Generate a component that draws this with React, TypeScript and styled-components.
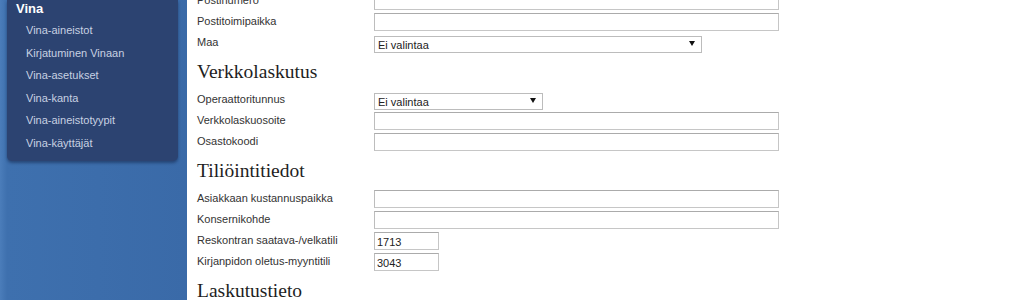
import styled, { createGlobalStyle } from "styled-components";

const GlobalStyle = createGlobalStyle`
  html, body {
    margin: 0;
    padding: 0;
    background: #fff;
  }
  body {
    font-family: "Liberation Sans", Arial, sans-serif;
    overflow: hidden;
  }
`;

type Field = {
    label: string
    kind?: 'input' | 'select'
    width: number
    value?: string
}

type Section = {
    title?: string
    fields: Field[]
}

const menu = [
    'Vina-aineistot',
    'Kirjatuminen Vinaan',
    'Vina-asetukset',
    'Vina-kanta',
    'Vina-aineistotyypit',
    'Vina-käyttäjät',
]

const sections: Section[] = [
    {
        fields: [
            { label: 'Postinumero', width: 405 },
            { label: 'Postitoimipaikka', width: 405 },
            { label: 'Maa', kind: 'select', width: 328, value: 'Ei valintaa' },
        ],
    },
    {
        title: 'Verkkolaskutus',
        fields: [
            { label: 'Operaattoritunnus', kind: 'select', width: 169, value: 'Ei valintaa' },
            { label: 'Verkkolaskuosoite', width: 405 },
            { label: 'Osastokoodi', width: 405 },
        ],
    },
    {
        title: 'Tiliöintitiedot',
        fields: [
            { label: 'Asiakkaan kustannuspaikka', width: 405 },
            { label: 'Konsernikohde', width: 405 },
            { label: 'Reskontran saatava-/velkatili', width: 65, value: '1713' },
            { label: 'Kirjanpidon oletus-myyntitili', width: 65, value: '3043' },
        ],
    },
    {
        title: 'Laskutustieto',
        fields: [],
    },
]

export default function App() {
    return (
        <Page>
            <GlobalStyle />
            <Sidebar>
                <Panel>
                    <PanelTitle>Vina</PanelTitle>
                    <Menu>
                        {menu.map(item => <MenuItem key={item}>{item}</MenuItem>)}
                    </Menu>
                </Panel>
            </Sidebar>
            <Content>
                <Form>
                    {sections.map((section, i) => (
                        <div key={i}>
                            {section.title && <Heading>{section.title}</Heading>}
                            {section.fields.map(field => (
                                <Row key={field.label}>
                                    <Label>{field.label}</Label>
                                    {field.kind === 'select' ? (
                                        <SelectWrap $width={field.width}>
                                            <Select defaultValue={field.value}>
                                                <option>{field.value}</option>
                                            </Select>
                                        </SelectWrap>
                                    ) : (
                                        <Input $width={field.width} defaultValue={field.value} />
                                    )}
                                </Row>
                            ))}
                        </div>
                    ))}
                </Form>
            </Content>
        </Page>
    )
}

const Page = styled.div`
    display: flex;
    height: 300px;
    overflow: hidden;
`

const Sidebar = styled.div`
    flex: 0 0 187px;
    background: linear-gradient(to right, #4b7dba 0px, #3e70ae 7px, #3a6aa8 100%);
`

const Panel = styled.div`
    margin-left: 7px;
    width: 171px;
    background: #2c4371;
    border-radius: 0 0 5px 5px;
    box-shadow: 0 2px 3px rgba(10, 25, 55, 0.45);
    padding-bottom: 6px;
`

const PanelTitle = styled.div`
    padding-left: 9px;
    font-size: 13px;
    font-weight: bold;
    line-height: 18px;
    color: #fff;
`

const Menu = styled.ul`
    list-style: none;
    margin: 1px 0 0;
    padding: 0;
`

const MenuItem = styled.li`
    padding-left: 19px;
    font-size: 11px;
    line-height: 22.6px;
    color: #c8d1e2;
`

const Content = styled.div`
    flex: 1;
    background: #fff;
    padding-left: 10px;
`

const Form = styled.div`
    margin-top: -9.5px;
`

const Heading = styled.h2`
    margin: 0;
    height: 36px;
    font-family: "Liberation Serif", Georgia, serif;
    font-weight: normal;
    font-size: 19.5px;
    line-height: 36px;
    color: #1e1e1e;
`

const Row = styled.div`
    display: grid;
    grid-template-columns: 177px auto;
    align-items: center;
    height: 21px;
`

const Label = styled.span`
    padding-bottom: 3px;
    font-size: 11px;
    color: #333;
`

const Input = styled.input<{ $width: number }>`
    box-sizing: border-box;
    width: ${({ $width }) => $width}px;
    height: 18px;
    margin: 0;
    padding: 1px 2px 0;
    border: 1px solid #c6c6c6;
    border-top-color: #ababab;
    border-left-color: #bdbdbd;
    font-family: "Liberation Sans", Arial, sans-serif;
    font-size: 11px;
    color: #222;
    background: #fff;
    outline: none;
`

const SelectWrap = styled.span<{ $width: number }>`
    position: relative;
    display: block;
    width: ${({ $width }) => $width}px;
    height: 17px;

    &::after {
        content: "";
        position: absolute;
        right: 7px;
        top: 6px;
        border-left: 3px solid transparent;
        border-right: 3px solid transparent;
        border-top: 5px solid #111;
        pointer-events: none;
    }
`

const Select = styled.select`
    box-sizing: border-box;
    appearance: none;
    width: 100%;
    height: 17px;
    margin: 0;
    padding: 0 0 0 3px;
    border: 1px solid #bcbcbc;
    border-radius: 0;
    font-family: "Liberation Sans", Arial, sans-serif;
    font-size: 11px;
    color: #222;
    background: #fff;
    outline: none;
`
